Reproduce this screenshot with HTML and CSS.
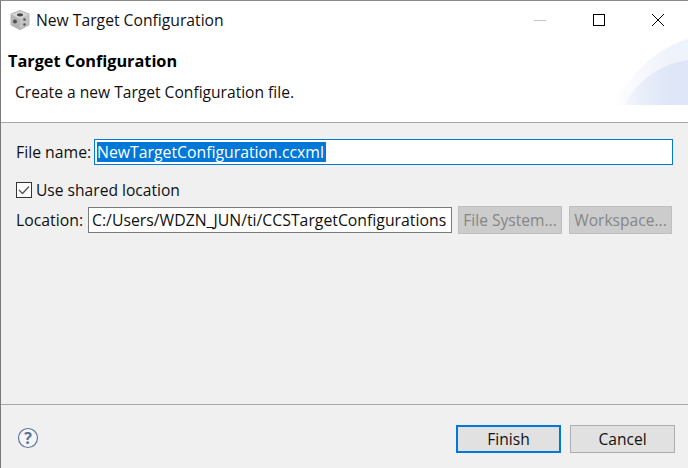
FILE: index.html
```html
<!DOCTYPE html>
<html lang="en">
<head>
  <meta charset="UTF-8">
  <title>New Target Configuration</title>
  <link rel="stylesheet" href="styles.css">
</head>
<body>
  <div class="dialog">
    <!-- Title bar -->
    <div class="titlebar">
      <svg class="app-icon" width="22" height="22" viewBox="0 0 22 22">
        <path d="M11 2 L19.5 5.5 V15.5 L11 20 L2.5 15.5 V5.5 Z" fill="#b5b5b5" stroke="#b5b5b5" stroke-width="2" stroke-linejoin="round"/>
        <path d="M11 2 L19.5 5.5 L11 10 L2.5 5.5 Z" fill="#d6d6d6"/>
        <path d="M11 10 L19.5 5.5 V15.5 L11 20 Z" fill="#c4c4c4"/>
        <ellipse cx="11" cy="5.8" rx="3" ry="1.6" fill="#454545"/>
        <circle cx="6" cy="12.5" r="2" fill="#505050"/>
        <circle cx="15.5" cy="10.5" r="1.3" fill="#555"/>
        <circle cx="15.5" cy="15.5" r="1.3" fill="#555"/>
      </svg>
      <span class="title-text">New Target Configuration</span>
      <div class="win-buttons">
        <svg width="14" height="14" viewBox="0 0 14 14"><path d="M1 7.5 H13" stroke="#c4c4c4" fill="none"/></svg>
        <svg width="14" height="14" viewBox="0 0 14 14"><rect x="1.5" y="1.5" width="11" height="11" stroke="#000" fill="none"/></svg>
        <svg width="14" height="14" viewBox="0 0 14 14"><path d="M1 1 L13 13 M13 1 L1 13" stroke="#000" fill="none"/></svg>
      </div>
    </div>

    <!-- Banner -->
    <div class="banner">
      <h1>Target Configuration</h1>
      <p>Create a new Target Configuration file.</p>
      <svg class="banner-art" width="75" height="66" viewBox="0 0 75 66">
        <defs>
          <linearGradient id="fade" gradientUnits="userSpaceOnUse" x1="-4" y1="0" x2="56" y2="0">
            <stop offset="0" stop-color="#dfe6f7" stop-opacity="0"/>
            <stop offset="1" stop-color="#dfe6f7"/>
          </linearGradient>
        </defs>
        <path d="M0 66 C16 38 40 10 75 0 V66 Z" fill="url(#fade)" opacity="0.5"/>
        <path d="M12 66 C25 40 48 25 75 21 V66 Z" fill="url(#fade)"/>
      </svg>
    </div>

    <!-- Form -->
    <div class="content">
      <div class="row row-file">
        <label class="label">File name:</label>
        <div class="input input-focus"><span class="selected">NewTargetConfiguration.ccxml</span></div>
      </div>
      <div class="row row-check">
        <svg class="checkbox" width="16" height="16" viewBox="0 0 16 16">
          <rect x="0.5" y="0.5" width="15" height="15" fill="#fff" stroke="#333"/>
          <path d="M3 8 L6.5 11.5 L13 4.5" fill="none" stroke="#555" stroke-width="1.3"/>
        </svg>
        <span>Use shared location</span>
      </div>
      <div class="row row-location">
        <label class="label">Location:</label>
        <div class="input input-plain">C:/Users/WDZN_JUN/ti/CCSTargetConfigurations</div>
        <div class="btn-disabled btn-fs">File System...</div>
        <div class="btn-disabled btn-ws">Workspace...</div>
      </div>
    </div>

    <!-- Footer -->
    <div class="footer">
      <svg class="help" width="22" height="22" viewBox="0 0 22 22">
        <circle cx="11" cy="11" r="9.5" fill="#f4f5f7" stroke="#5f7a9c" stroke-width="1.2"/>
        <text x="11" y="16.5" text-anchor="middle" class="help-mark">?</text>
      </svg>
      <div class="footer-buttons">
        <div class="btn btn-default">Finish</div>
        <div class="btn">Cancel</div>
      </div>
    </div>
  </div>
</body>
</html>
```

FILE: styles.css
```css
html, body {
  margin: 0;
  padding: 0;
}

body {
  width: 688px;
  height: 468px;
  overflow: hidden;
  background: #f0f0f0;
  color: #111;
  font-family: "Open Sans", "Noto Sans", sans-serif;
  font-size: 15.6px;
}

.dialog {
  display: flex;
  flex-direction: column;
  height: 468px;
  box-sizing: border-box;
  border-top: 1px solid #8a8a8a;
  border-left: 1px solid #7a7a7a;
}

/* Title bar */
.titlebar {
  display: flex;
  align-items: center;
  height: 40px;
  background: #fff;
  padding-left: 8px;
}

.app-icon {
  margin-right: 5px;
  margin-bottom: 2px;
  filter: blur(0.4px);
}

.title-text {
  margin-bottom: 2px;
  font-size: 15.7px;
}

.win-buttons {
  margin-left: auto;
  display: flex;
  gap: 45px;
  padding-right: 23px;
  margin-bottom: 2px;
}

/* Banner */
.banner {
  position: relative;
  height: 81px;
  background: #fff;
  border-bottom: 1px solid #a8a8a8;
}

.banner h1 {
  margin: 0;
  padding: 10px 0 0 7px;
  font-size: 16.3px;
  line-height: 20px;
  font-weight: 700;
  color: #000;
}

.banner p {
  margin: 0;
  padding: 11px 0 0 14px;
  line-height: 20px;
}

.banner-art {
  position: absolute;
  right: 0;
  bottom: 17px;
}

/* Form */
.content {
  flex: 1;
  padding: 16px 15px 0 15px;
  border-bottom: 1px solid #a8a8a8;
}

.row {
  display: flex;
  align-items: center;
}

.row-file {
  height: 26px;
}

.label {
  width: 73px;
  margin-right: 5px;
  font-size: 15.8px;
  white-space: nowrap;
}

.row-location .label {
  width: 67px;
}

.input {
  box-sizing: border-box;
  background: #fff;
  white-space: nowrap;
  overflow: hidden;
}

.input-focus {
  flex: 1;
  height: 26px;
  border: 1px solid #0078d7;
  padding: 2px 2px;
  line-height: 20px;
}

.selected {
  display: inline-block;
  width: 229px;
  height: 20px;
  font-size: 15.8px;
  background: #0078d7;
  color: #fff;
}

.row-check {
  margin-top: 14px;
  height: 22px;
}

.checkbox {
  margin-right: 4px;
}

.row-location {
  margin-top: 5px;
  height: 28px;
}

.input-plain {
  width: 364px;
  height: 26px;
  border: 1px solid #7a7a7a;
  padding: 0 3px;
  font-size: 15.8px;
  line-height: 24px;
  margin-right: 6px;
  flex-shrink: 0;
}

.btn-disabled {
  box-sizing: border-box;
  height: 28px;
  background: #cccccc;
  border: 1px solid #bfbfbf;
  color: #868686;
  text-align: center;
  line-height: 26px;
  flex-shrink: 0;
}

.btn-fs {
  width: 104px;
  margin-right: 7px;
}

.btn-ws {
  width: 103px;
}

/* Footer */
.footer {
  display: flex;
  align-items: center;
  height: 63px;
  padding: 0 13px 0 16px;
}

.help {
  margin-top: 2px;
}

.help-mark {
  font-family: "Open Sans", sans-serif;
  font-size: 16px;
  font-weight: 700;
  fill: #5a7396;
}

.footer-buttons {
  margin-left: auto;
  display: flex;
  gap: 9px;
  margin-top: 5px;
}

.btn {
  box-sizing: border-box;
  width: 105px;
  height: 28px;
  background: #e1e1e1;
  border: 1px solid #adadad;
  text-align: center;
  line-height: 26px;
}

.btn-default {
  border: 2px solid #0078d7;
  line-height: 24px;
}
```
